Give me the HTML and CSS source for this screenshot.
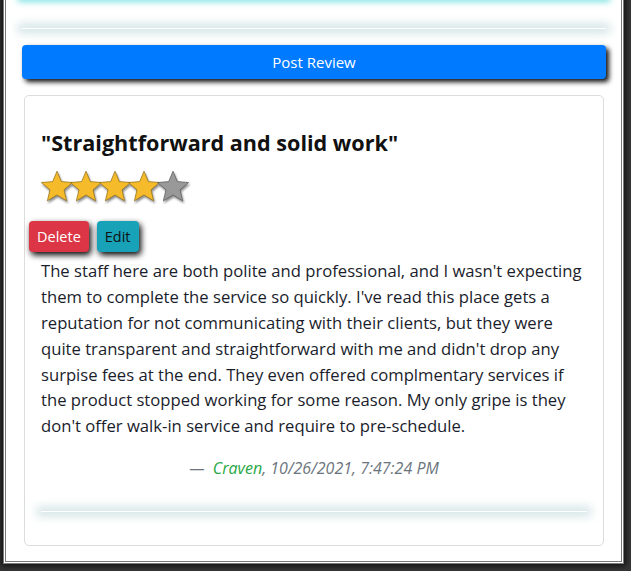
FILE: index.html
```html
<!DOCTYPE html>
<html lang="en">
<head>
<meta charset="utf-8">
<title>Review</title>
<link rel="stylesheet" href="styles.css">
</head>
<body>
<div class="frame">
  <div class="glow-top"></div>
  <div class="glow-line top-line"></div>
  <button class="btn btn-post">Post Review</button>
  <div class="card">
    <h4 class="review-title">"Straightforward and solid work"</h4>
    <div class="stars">
      <svg class="star on" viewBox="0 0 30 30"><path d="M15 1 L18.82 10.24 L28.79 11.02 L21.18 17.51 L23.52 27.23 L15 22 L6.48 27.23 L8.82 17.51 L1.21 11.02 L11.18 10.24 Z"/></svg>
      <svg class="star on" viewBox="0 0 30 30"><path d="M15 1 L18.82 10.24 L28.79 11.02 L21.18 17.51 L23.52 27.23 L15 22 L6.48 27.23 L8.82 17.51 L1.21 11.02 L11.18 10.24 Z"/></svg>
      <svg class="star on" viewBox="0 0 30 30"><path d="M15 1 L18.82 10.24 L28.79 11.02 L21.18 17.51 L23.52 27.23 L15 22 L6.48 27.23 L8.82 17.51 L1.21 11.02 L11.18 10.24 Z"/></svg>
      <svg class="star on" viewBox="0 0 30 30"><path d="M15 1 L18.82 10.24 L28.79 11.02 L21.18 17.51 L23.52 27.23 L15 22 L6.48 27.23 L8.82 17.51 L1.21 11.02 L11.18 10.24 Z"/></svg>
      <svg class="star off" viewBox="0 0 30 30"><path d="M15 1 L18.82 10.24 L28.79 11.02 L21.18 17.51 L23.52 27.23 L15 22 L6.48 27.23 L8.82 17.51 L1.21 11.02 L11.18 10.24 Z"/></svg>
    </div>
    <div class="actions">
      <button class="btn btn-delete">Delete</button>
      <button class="btn btn-edit">Edit</button>
    </div>
    <p class="review-text">The staff here are both polite and professional, and I wasn't expecting them to complete the service so quickly. I've read this place gets a reputation for not communicating with their clients, but they were quite transparent and straightforward with me and didn't drop any surpise fees at the end. They even offered complmentary services if the product stopped working for some reason. My only gripe is they don't offer walk-in service and require to pre-schedule.</p>
    <p class="review-footer">&mdash;&nbsp; <span class="author">Craven</span>, 10/26/2021, 7:47:24 PM</p>
    <div class="glow-line bottom-line"></div>
  </div>
</div>
</body>
</html>
```

FILE: styles.css
```css
html, body {
  margin: 0;
  padding: 0;
  background: #363636;
  height: 100%;
  overflow: hidden;
}

body {
  font-family: "Open Sans", "Noto Sans", sans-serif;
}

.frame {
  margin: -30px 7px 0 3px;
  border: 3px double #7a7a7a;
  background: #fff;
  padding: 0 15px 15px 16px;
  box-shadow: 0 0 6px 2px #111;
}

.glow-top {
  margin-top: 23px;
  height: 2px;
  background: #9ee8e8;
  box-shadow: 0 0 6px 4px rgba(100, 220, 220, 0.8);
}

.glow-line {
  height: 1px;
  background: #fff;
  box-shadow: 0 0 10px 4px rgba(110, 165, 165, 0.33);
}

.top-line {
  margin-top: 30px;
}

.btn {
  font-family: "Open Sans", "Noto Sans", sans-serif;
  border: none;
  border-radius: 4px;
  cursor: pointer;
}

.btn-post {
  display: block;
  width: 100%;
  height: 34px;
  margin-top: 16px;
  background: #007bff;
  color: #fff;
  font-size: 15px;
  box-shadow: 3px 3px 5px #111;
}

.card {
  margin: 16px 2px 0 2px;
  border: 1px solid #dcdcdc;
  border-radius: 5px;
  padding: 16px 16px 33px 16px;
}

.review-title {
  margin: 18px 0 0 0;
  font-size: 21.6px;
  font-weight: 700;
  line-height: 26.4px;
  color: #111;
}

.stars {
  display: flex;
  margin-top: 15px;
  height: 31px;
}

.star {
  width: 34px;
  height: 34px;
  margin: -1px -4px 0 -1px;
  filter: drop-shadow(1px 2px 1px rgba(0, 0, 0, 0.45));
}

.star path {
  stroke-width: 0.6;
  stroke-linejoin: round;
}

.star.on path {
  fill: #f5bb2b;
  stroke: #8c6a12;
}

.star.off path {
  fill: #999;
  stroke: #555;
}

.actions {
  display: flex;
  gap: 8px;
  margin: 19px 0 0 -12px;
}

.btn-delete,
.btn-edit {
  height: 31px;
  font-size: 14.5px;
  padding: 0 8px;
  box-shadow: 2px 3px 6px #000;
}

.btn-delete {
  background: #dc3545;
  color: #fff;
}

.btn-edit {
  background: #17a2b8;
  color: #111;
}

.review-text {
  margin: 6px 0 0 0;
  font-size: 16.65px;
  line-height: 25.8px;
  color: #1a1d2b;
}

.review-footer {
  margin: 17px 0 0 0;
  text-align: center;
  font-size: 16px;
  line-height: 25.8px;
  font-style: italic;
  color: #6c757d;
}

.author {
  color: #28a745;
}

.bottom-line {
  margin-top: 29px;
}
```
